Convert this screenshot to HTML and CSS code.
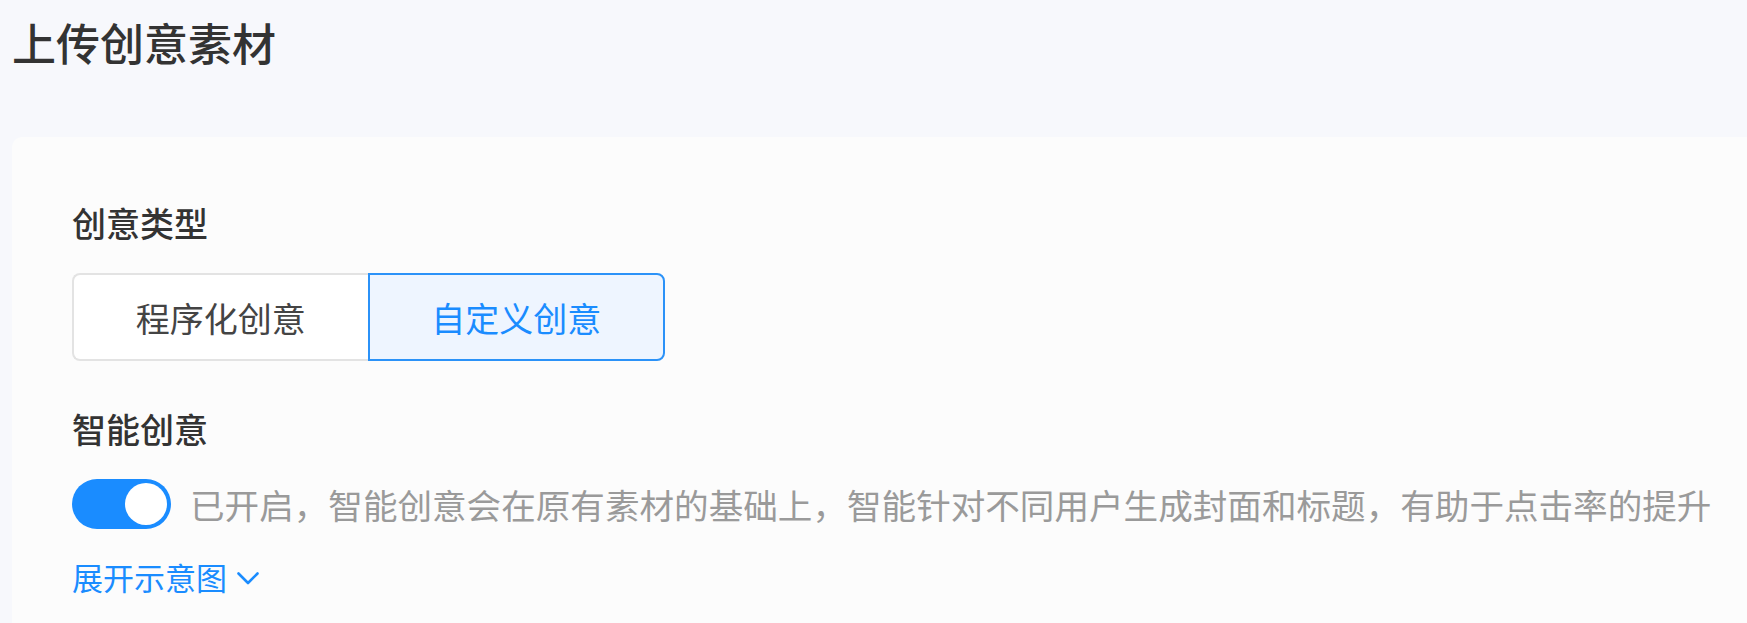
FILE: index.html
```html
<!DOCTYPE html>
<html lang="zh-CN">
<head>
<meta charset="utf-8">
<title>上传创意素材</title>
<link rel="stylesheet" href="styles.css">
</head>
<body>
<div class="page">
  <h1 class="page-title">上传创意素材</h1>
  <section class="card">
    <div class="field-label">创意类型</div>
    <div class="segmented">
      <div class="segment">程序化创意</div>
      <div class="segment segment-active">自定义创意</div>
    </div>
    <div class="field-label field-label-second">智能创意</div>
    <div class="switch-row">
      <div class="switch"><span class="switch-knob"></span></div>
      <span class="switch-desc">已开启，智能创意会在原有素材的基础上，智能针对不同用户生成封面和标题，有助于点击率的提升</span>
    </div>
    <div class="expand-link">
      <span>展开示意图</span>
      <svg class="chevron" width="22" height="13" viewBox="0 0 22 13"><polyline points="1.5,1.5 11,11 20.5,1.5" fill="none" stroke="#1a8cff" stroke-width="2.6" stroke-linecap="round" stroke-linejoin="round"/></svg>
    </div>
  </section>
</div>
</body>
</html>
```

FILE: styles.css
```css
* { box-sizing: border-box; }
html, body {
  margin: 0;
  padding: 0;
  background: #f7f8fc;
  font-family: "Noto Sans CJK SC", "Noto Sans", sans-serif;
  overflow: hidden;
}
.page {
  display: flex;
  flex-direction: column;
  padding: 10px 0 0 12px;
  height: 623px;
}
.page-title {
  margin: 0;
  font-size: 44px;
  line-height: 64px;
  font-weight: 500;
  color: #333;
}
.card {
  flex: 1;
  margin-top: 63px;
  background: #fcfcfc;
  border-radius: 10px 0 0 0;
  padding: 62px 0 0 60px;
  overflow: hidden;
}
.field-label {
  font-size: 34px;
  line-height: 48px;
  font-weight: 500;
  color: #333;
}
.field-label-second {
  margin-top: 44px;
}
.segmented {
  display: flex;
  margin-top: 26px;
  width: 593px;
}
.segment {
  flex: 1;
  height: 88px;
  display: flex;
  align-items: center;
  justify-content: center;
  font-size: 34px;
  color: #444;
  background: #fff;
  border: 2px solid #e3e3e3;
  border-right: none;
  border-radius: 8px 0 0 8px;
}
.segment-active {
  color: #1a8cff;
  background: #eef5ff;
  border: 2px solid #2b92f8;
  border-radius: 0 8px 8px 0;
}
.switch-row {
  display: flex;
  align-items: center;
  margin-top: 26px;
  height: 50px;
}
.switch {
  width: 99px;
  height: 50px;
  border-radius: 25px;
  background: #1a8cff;
  display: flex;
  align-items: center;
  justify-content: flex-end;
  padding-right: 4px;
  flex-shrink: 0;
}
.switch-knob {
  width: 42px;
  height: 42px;
  border-radius: 50%;
  background: #fff;
}
.switch-desc {
  margin-left: 19px;
  font-size: 34.6px;
  color: #9a9a9a;
  white-space: nowrap;
}
.expand-link {
  display: flex;
  align-items: center;
  margin-top: 28px;
  font-size: 31px;
  line-height: 40px;
  color: #1a8cff;
}
.chevron {
  margin-left: 10px;
  margin-top: 2px;
}
```
